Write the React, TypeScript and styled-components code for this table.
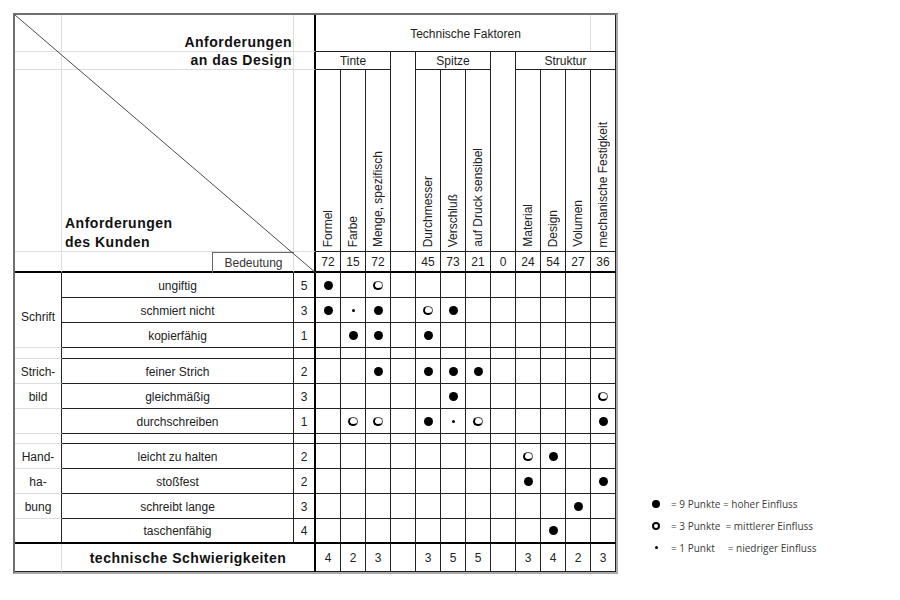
import React from "react";
import styled, { createGlobalStyle, css } from "styled-components";

type Line = "none" | "faint" | "thin" | "thick";
type MarkKind = "F" | "O" | "d";

const borderOf = (line: Line = "none") => {
  switch (line) {
    case "faint":
      return "1px solid #dddddd";
    case "thin":
      return "1px solid #222";
    case "thick":
      return "2px solid #000";
    default:
      return "none";
  }
};

const GlobalStyle = createGlobalStyle`
  body {
    margin: 0;
    background: #fff;
    font-family: "Liberation Sans", Arial, sans-serif;
  }
`;

const Page = styled.div`
  display: flex;
  align-items: flex-start;
  gap: 33px;
  padding: 13px 0 0 13px;
`;

const Frame = styled.div`
  border: 2px solid;
  border-color: #707070 #a9a9a9 #a9a9a9 #707070;
`;

const Sheet = styled.div`
  display: grid;
  grid-template-columns: 47px 232px 22px repeat(12, 25px);
  grid-template-rows:
    37px 18px 182px 21px
    25px 25px 25px 11px
    25px 25px 25px 10px
    25px 25px 25px 25px
    28px;
  font-size: 12px;
  color: #222;
`;

const Cell = styled.div<{
  $col: string;
  $row: string;
  $right?: Line;
  $bottom?: Line;
}>`
  grid-column: ${(p) => p.$col};
  grid-row: ${(p) => p.$row};
  border-right: ${(p) => borderOf(p.$right)};
  border-bottom: ${(p) => borderOf(p.$bottom)};
  display: flex;
  align-items: center;
  justify-content: center;
  min-width: 0;
  white-space: nowrap;
`;

const TitleCell = styled(Cell)`
  padding-top: 2px;
`;

const GroupCell = styled(Cell)`
  padding-top: 1px;
`;

const FactorCell = styled(Cell)`
  align-items: flex-end;
  padding-bottom: 4px;
`;

const FactorName = styled.span`
  writing-mode: vertical-rl;
  transform: rotate(180deg);
  white-space: nowrap;
`;

const DesignLabel = styled(Cell)`
  justify-content: flex-end;
  align-items: flex-end;
  text-align: right;
  font-size: 14px;
  font-weight: bold;
  letter-spacing: 0.5px;
  line-height: 18px;
  color: #111;
  padding: 0 2px 1px 0;
`;

const CustomerLabel = styled(Cell)`
  justify-content: flex-start;
  align-items: flex-end;
  font-size: 14px;
  font-weight: bold;
  letter-spacing: 0.5px;
  line-height: 19px;
  color: #111;
  padding: 0 0 0 3px;
`;

const WeightTitle = styled(Cell)`
  justify-self: end;
  width: 81px;
  border-top: 1px solid #6a6a6a;
  border-left: 1px solid #6a6a6a;
  color: #333;
  padding-bottom: 1px;
`;

const CategoryCell = styled(Cell)<{ $lowered?: boolean }>`
  padding-top: ${(p) => (p.$lowered ? "14px" : "1px")};
`;

const BodyCell = styled(Cell)`
  padding-top: 1px;
`;

const SumLabel = styled(Cell)`
  font-size: 14px;
  font-weight: bold;
  letter-spacing: 0.5px;
  color: #111;
`;

const Diagonal = styled.svg`
  grid-column: 1 / 4;
  grid-row: 1 / 5;
  width: 100%;
  height: 100%;
  pointer-events: none;
`;

const Mark = styled.span<{ $kind: MarkKind }>`
  display: block;
  box-sizing: border-box;
  border-radius: 50%;
  ${(p) =>
    p.$kind === "F" &&
    css`
      width: 9px;
      height: 9px;
      background: #000;
    `}
  ${(p) =>
    p.$kind === "O" &&
    css`
      width: 10px;
      height: 9px;
      border: 1px solid #555;
      border-left: 2px solid #000;
      border-bottom: 2px solid #000;
    `}
  ${(p) =>
    p.$kind === "d" &&
    css`
      width: 3px;
      height: 3px;
      background: #000;
    `}
`;

const Legend = styled.div`
  align-self: flex-end;
  margin-bottom: 19px;
  display: flex;
  flex-direction: column;
  gap: 7px;
  font-family: "Open Sans", "Liberation Sans", sans-serif;
  font-size: 10px;
  color: #3a3a3a;
`;

const LegendRow = styled.div`
  display: flex;
  align-items: center;
  height: 15px;
`;

const LegendSlot = styled.div`
  width: 10px;
  display: flex;
  justify-content: center;
  margin-right: 10px;
`;

const LegendMark = styled.span<{ $kind: MarkKind }>`
  display: block;
  box-sizing: border-box;
  border-radius: 50%;
  ${(p) =>
    p.$kind === "F" &&
    css`
      width: 8px;
      height: 8px;
      background: #000;
    `}
  ${(p) =>
    p.$kind === "O" &&
    css`
      width: 8px;
      height: 8px;
      border: 2px solid #000;
    `}
  ${(p) =>
    p.$kind === "d" &&
    css`
      width: 3px;
      height: 3px;
      background: #000;
    `}
`;

const LegendText = styled.span`
  white-space: pre;
`;

const factors = [
  "Formel",
  "Farbe",
  "Menge, spezifisch",
  "",
  "Durchmesser",
  "Verschluß",
  "auf Druck sensibel",
  "",
  "Material",
  "Design",
  "Volumen",
  "mechanische Festigkeit",
];
const importance = ["72", "15", "72", "", "45", "73", "21", "0", "24", "54", "27", "36"];
const difficulty = ["4", "2", "3", "", "3", "5", "5", "", "3", "4", "2", "3"];

const groups: { name: string; col: string; bottom: Line }[] = [
  { name: "Tinte", col: "4 / 7", bottom: "thin" },
  { name: "", col: "7 / 8", bottom: "none" },
  { name: "Spitze", col: "8 / 11", bottom: "thin" },
  { name: "", col: "11 / 12", bottom: "none" },
  { name: "Struktur", col: "12 / 16", bottom: "thin" },
];

const requirements = [
  { row: 5, label: "ungiftig", weight: "5", marks: "F.O........." },
  { row: 6, label: "schmiert nicht", weight: "3", marks: "FdF.OF......" },
  { row: 7, label: "kopierfähig", weight: "1", marks: ".FF.F......." },
  { row: 9, label: "feiner Strich", weight: "2", marks: "..F.FFF....." },
  { row: 10, label: "gleichmäßig", weight: "3", marks: ".....F.....O" },
  { row: 11, label: "durchschreiben", weight: "1", marks: ".OO.FdO....F" },
  { row: 13, label: "leicht zu halten", weight: "2", marks: "........OF.." },
  { row: 14, label: "stoßfest", weight: "2", marks: "........F..F" },
  { row: 15, label: "schreibt lange", weight: "3", marks: "..........F." },
  { row: 16, label: "taschenfähig", weight: "4", marks: ".........F.." },
];
const spacerRows = [8, 12];

const categories: { label: string; row: string; lowered?: boolean; bottom?: Line }[] = [
  { label: "Schrift", row: "5 / 8", lowered: true },
  { label: "", row: "8 / 9" },
  { label: "Strich-", row: "9 / 10" },
  { label: "bild", row: "10 / 11" },
  { label: "", row: "11 / 12" },
  { label: "", row: "12 / 13" },
  { label: "Hand-", row: "13 / 14" },
  { label: "ha-", row: "14 / 15" },
  { label: "bung", row: "15 / 16" },
  { label: "", row: "16 / 17", bottom: "thick" },
];

const legend: { kind: MarkKind; text: string }[] = [
  { kind: "F", text: "= 9 Punkte = hoher Einfluss" },
  { kind: "O", text: "= 3 Punkte  = mittlerer Einfluss" },
  { kind: "d", text: "= 1 Punkt     = niedriger Einfluss" },
];

function HeaderCorner() {
  const cells = [];
  for (let r = 1; r <= 4; r++) {
    for (let c = 1; c <= 3; c++) {
      cells.push(
        <Cell
          key={`hc-${r}-${c}`}
          $col={`${c}`}
          $row={`${r}`}
          $right={c === 3 ? "thick" : "faint"}
          $bottom={r === 4 ? "thick" : "faint"}
        />
      );
    }
  }
  return (
    <>
      {cells}
      <DesignLabel $col="2" $row="1 / 3">
        Anforderungen
        <br />
        an das Design
      </DesignLabel>
      <CustomerLabel $col="2" $row="3">
        Anforderungen
        <br />
        des Kunden
      </CustomerLabel>
      <WeightTitle $col="2" $row="4">
        Bedeutung
      </WeightTitle>
      <Diagonal viewBox="0 0 100 100" preserveAspectRatio="none">
        <line
          x1="0"
          y1="0"
          x2="100"
          y2="100"
          stroke="#4a4a4a"
          strokeWidth="1"
          vectorEffect="non-scaling-stroke"
        />
      </Diagonal>
    </>
  );
}

function FactorHeader() {
  return (
    <>
      <Cell $col="4 / 15" $row="1" $right="faint" />
      <TitleCell $col="4 / 16" $row="1" $right="thin" $bottom="thin">
        Technische Faktoren
      </TitleCell>
      {groups.map((g) => (
        <GroupCell key={g.col} $col={g.col} $row="2" $right="thin" $bottom={g.bottom}>
          {g.name}
        </GroupCell>
      ))}
      {factors.map((f, i) => (
        <FactorCell key={`f-${i}`} $col={`${i + 4}`} $row="3" $right="thin" $bottom="thin">
          <FactorName>{f}</FactorName>
        </FactorCell>
      ))}
      {importance.map((v, i) => (
        <BodyCell key={`i-${i}`} $col={`${i + 4}`} $row="4" $right="thin" $bottom="thick">
          {v}
        </BodyCell>
      ))}
    </>
  );
}

function Body() {
  return (
    <>
      {categories.map((c) => (
        <CategoryCell
          key={c.row}
          $col="1"
          $row={c.row}
          $right="thin"
          $bottom={c.bottom ?? "faint"}
          $lowered={c.lowered}
        >
          {c.label}
        </CategoryCell>
      ))}
      {requirements.map((req) => {
        const bottom: Line = req.row === 16 ? "thick" : "thin";
        return (
          <React.Fragment key={req.label}>
            <BodyCell $col="2" $row={`${req.row}`} $right="thin" $bottom={bottom}>
              {req.label}
            </BodyCell>
            <BodyCell $col="3" $row={`${req.row}`} $right="thick" $bottom={bottom}>
              {req.weight}
            </BodyCell>
            {req.marks.split("").map((m, i) => (
              <Cell
                key={i}
                $col={`${i + 4}`}
                $row={`${req.row}`}
                $right="thin"
                $bottom={bottom}
              >
                {m !== "." && <Mark $kind={m as MarkKind} />}
              </Cell>
            ))}
          </React.Fragment>
        );
      })}
      {spacerRows.map((row) => (
        <React.Fragment key={`s-${row}`}>
          <Cell $col="2" $row={`${row}`} $right="thin" $bottom="thin" />
          <Cell $col="3" $row={`${row}`} $right="thick" $bottom="thin" />
          {factors.map((_, i) => (
            <Cell key={i} $col={`${i + 4}`} $row={`${row}`} $right="thin" $bottom="thin" />
          ))}
        </React.Fragment>
      ))}
    </>
  );
}

function Footer() {
  return (
    <>
      <Cell $col="1" $row="17" $right="faint" $bottom="thin" />
      <SumLabel $col="2 / 4" $row="17" $right="thick" $bottom="thin">
        technische Schwierigkeiten
      </SumLabel>
      {difficulty.map((d, i) => (
        <BodyCell key={`d-${i}`} $col={`${i + 4}`} $row="17" $right="thin" $bottom="thin">
          {d}
        </BodyCell>
      ))}
    </>
  );
}

export default function App() {
  return (
    <>
      <GlobalStyle />
      <Page>
        <Frame>
          <Sheet>
            <HeaderCorner />
            <FactorHeader />
            <Body />
            <Footer />
          </Sheet>
        </Frame>
        <Legend>
          {legend.map((l) => (
            <LegendRow key={l.kind}>
              <LegendSlot>
                <LegendMark $kind={l.kind} />
              </LegendSlot>
              <LegendText>{l.text}</LegendText>
            </LegendRow>
          ))}
        </Legend>
      </Page>
    </>
  );
}
